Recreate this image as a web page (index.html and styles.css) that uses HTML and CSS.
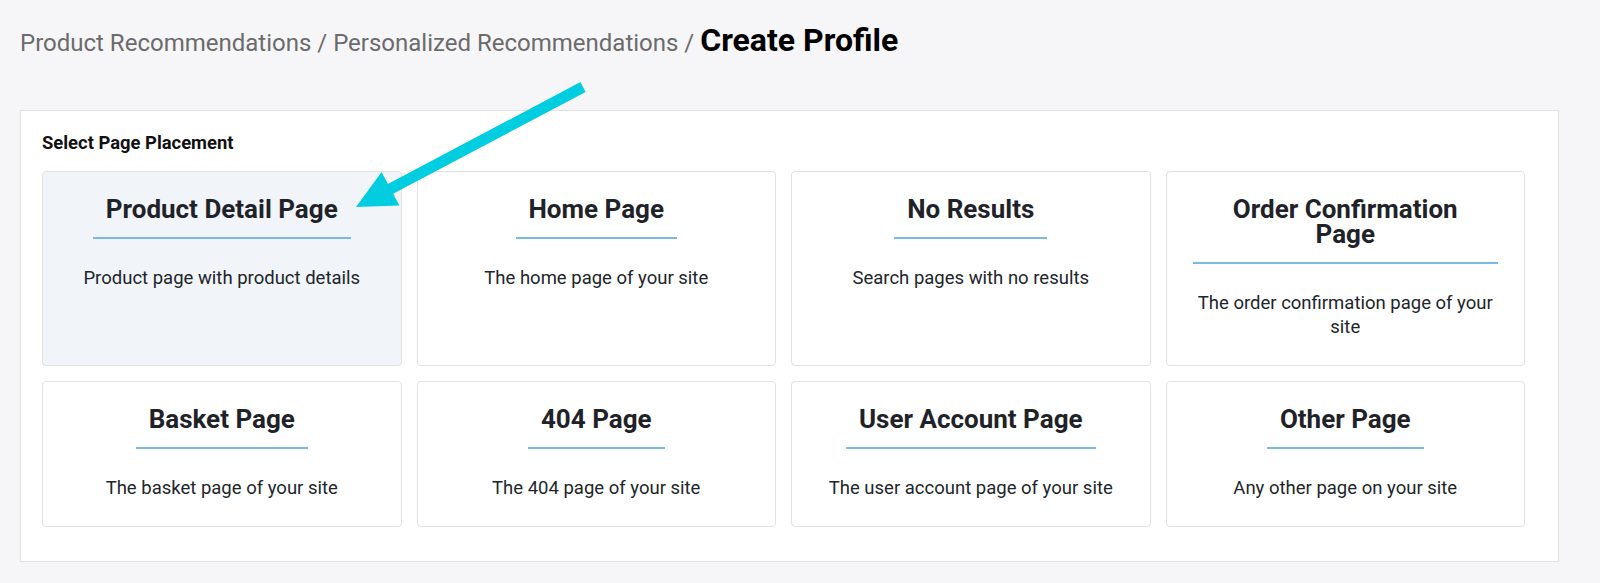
FILE: index.html
```html
<!DOCTYPE html>
<html lang="en">
<head>
    <meta charset="UTF-8">
    <meta name="viewport" content="width=device-width, initial-scale=1.0">
    <title>Create Profile</title>
    <link rel="stylesheet" href="styles.css">
</head>
<body>
    <div class="page">
        <h1 class="breadcrumb">
            <span class="crumb">Product Recommendations</span> / <span class="crumb">Personalized Recommendations</span> / <span class="current">Create Profile</span>
        </h1>

        <div class="panel">
            <div class="panel-label">Select Page Placement</div>
            <div class="placement-grid">
                <div class="placement selected">
                    <h3>Product Detail Page</h3>
                    <p>Product page with product details</p>
                </div>
                <div class="placement">
                    <h3>Home Page</h3>
                    <p>The home page of your site</p>
                </div>
                <div class="placement">
                    <h3>No Results</h3>
                    <p>Search pages with no results</p>
                </div>
                <div class="placement">
                    <h3>Order Confirmation Page</h3>
                    <p>The order confirmation page of your site</p>
                </div>
                <div class="placement">
                    <h3>Basket Page</h3>
                    <p>The basket page of your site</p>
                </div>
                <div class="placement">
                    <h3>404 Page</h3>
                    <p>The 404 page of your site</p>
                </div>
                <div class="placement">
                    <h3>User Account Page</h3>
                    <p>The user account page of your site</p>
                </div>
                <div class="placement">
                    <h3>Other Page</h3>
                    <p>Any other page on your site</p>
                </div>
            </div>
        </div>

        <!-- annotation arrow pointing at the selected card -->
        <svg class="arrow" width="260" height="150" viewBox="0 0 260 150">
            <polygon fill="#00cddf" points="240.4,12.1 47.9,113.9 41.6,102 16,137 59.4,135.6 53.1,123.7 245.6,21.9"/>
        </svg>
    </div>
</body>
</html>
```

FILE: styles.css
```css
body {
    margin: 0;
    background: #f6f6f8;
    font-family: Roboto, "Liberation Sans", Arial, sans-serif;
    color: #212529;
}
.page {
    position: relative;
    padding: 22px 41px 22px 20px;
}
.breadcrumb {
    margin: 0 0 49px;
    font-size: 24px;
    font-weight: 400;
    line-height: 36px;
    color: #6b6b6b;
}
.breadcrumb .current {
    font-size: 32px;
    font-weight: 700;
    color: #000;
}
.panel {
    background: #fff;
    border: 1px solid #e1e1e3;
    padding: 22px 33px 34px 21px;
}
.panel-label {
    font-size: 18.4px;
    font-weight: 700;
    line-height: 20px;
    color: #111;
    margin-bottom: 18px;
}
.placement-grid {
    display: grid;
    grid-template-columns: repeat(4, 1fr);
    gap: 15px;
}
.placement {
    border: 1px solid #e2e2e4;
    border-radius: 4px;
    background: #fff;
    padding: 25px 26px 26px;
    text-align: center;
}
.placement.selected {
    background: #f1f4f9;
}
.placement h3 {
    display: inline-block;
    margin: 0;
    padding: 0 13px 15px;
    font-size: 26px;
    font-weight: 700;
    line-height: 25px;
    color: #1f2329;
    border-bottom: 2px solid #79b9e3;
}
.placement p {
    margin: 27px 0 0;
    font-size: 18.5px;
    line-height: 24px;
    color: #212529;
}
.arrow {
    position: absolute;
    left: 340px;
    top: 70px;
}
```
